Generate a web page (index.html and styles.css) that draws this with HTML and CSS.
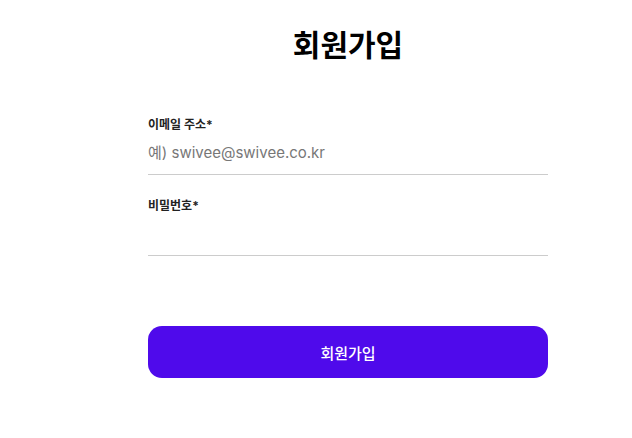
FILE: index.html
```html
<!DOCTYPE html>
<html lang="ko">
<head>
<meta charset="utf-8">
<link rel="stylesheet" href="styles.css">
</head>
<body>
<main class="page">
  <h1 class="title">회원가입</h1>
  <form class="form">
    <label class="field">
      <span class="label">이메일 주소*</span>
      <input class="input" type="text" placeholder="예) swivee@swivee.co.kr">
    </label>
    <label class="field">
      <span class="label">비밀번호*</span>
      <input class="input" type="password">
    </label>
    <button class="submit" type="button">회원가입</button>
  </form>
</main>
</body>
</html>
```
FILE: styles.css
```css
* { box-sizing: border-box; }
html, body { margin: 0; padding: 0; background: #fff; }
body {
  font-family: Inter, "Noto Sans CJK KR", sans-serif;
  color: #111;
}
.page {
  width: 400px;
  margin-left: 148px;
  padding-top: 24px;
  display: flex;
  flex-direction: column;
}
.title {
  margin: 0;
  text-align: center;
  font-size: 30px;
  font-weight: 700;
  line-height: 42px;
  color: #000;
}
.form {
  margin-top: 50px;
  display: flex;
  flex-direction: column;
}
.field {
  display: flex;
  flex-direction: column;
  margin-bottom: 22px;
}
.label {
  font-size: 12px;
  font-weight: 700;
  line-height: 18px;
  color: #222;
}
.input {
  border: none;
  border-bottom: 1px solid #cccccc;
  outline: none;
  padding: 6px 0 10px;
  height: 41px;
  font-family: Inter, "Noto Sans CJK KR", sans-serif;
  font-size: 15px;
  color: #222;
  background: transparent;
}
.input::placeholder { color: #777; }
.submit {
  margin-top: 48px;
  height: 52px;
  border: none;
  border-radius: 14px;
  background: #4f0aeb;
  color: #fff;
  font-family: Inter, "Noto Sans CJK KR", sans-serif;
  font-size: 15px;
  font-weight: 500;
}
```
